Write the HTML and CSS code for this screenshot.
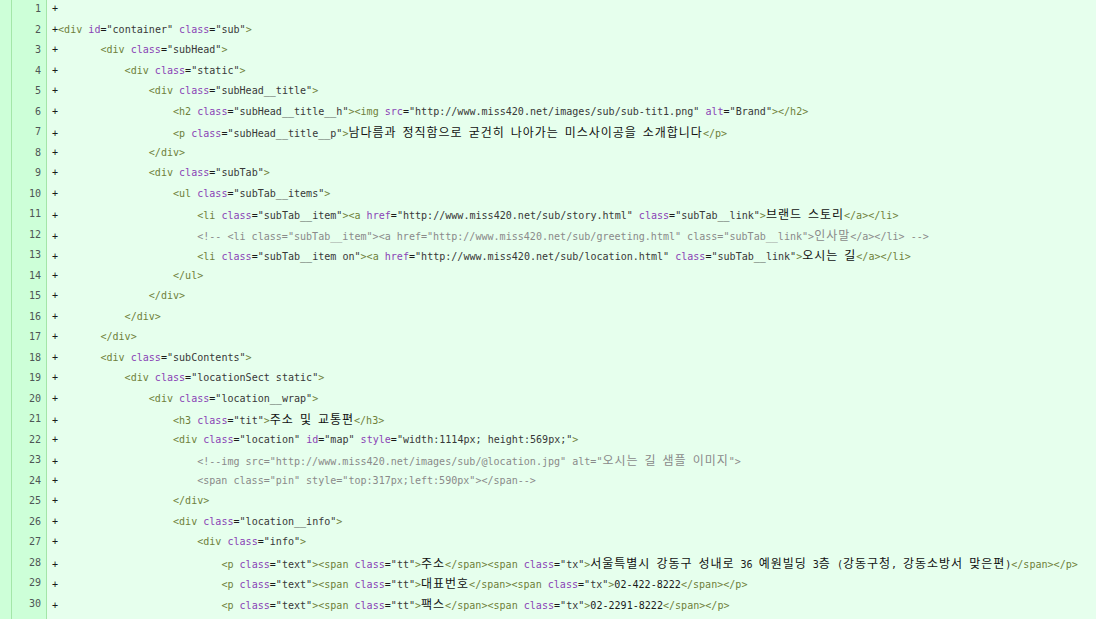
FILE: index.html
```html
<!DOCTYPE html>
<html lang="ko">
<head>
<meta charset="utf-8">
<title>diff</title>
<link rel="stylesheet" href="styles.css">
</head>
<body>
<div class="diff">
  <div class="marker"></div>
  <div class="gutter">
    <div class="num">1</div><div class="num">2</div><div class="num">3</div><div class="num">4</div><div class="num">5</div>
    <div class="num">6</div><div class="num">7</div><div class="num">8</div><div class="num">9</div><div class="num">10</div>
    <div class="num">11</div><div class="num">12</div><div class="num">13</div><div class="num">14</div><div class="num">15</div>
    <div class="num">16</div><div class="num">17</div><div class="num">18</div><div class="num">19</div><div class="num">20</div>
    <div class="num">21</div><div class="num">22</div><div class="num">23</div><div class="num">24</div><div class="num">25</div>
    <div class="num">26</div><div class="num">27</div><div class="num">28</div><div class="num">29</div><div class="num">30</div>
  </div>
  <div class="code">
<div class="line">+</div>
<div class="line">+<span class="t">&lt;div</span> <span class="a">id</span>=<span class="v">"container"</span> <span class="a">class</span>=<span class="v">"sub"</span><span class="t">&gt;</span></div>
<div class="line">+       <span class="t">&lt;div</span> <span class="a">class</span>=<span class="v">"subHead"</span><span class="t">&gt;</span></div>
<div class="line">+           <span class="t">&lt;div</span> <span class="a">class</span>=<span class="v">"static"</span><span class="t">&gt;</span></div>
<div class="line">+               <span class="t">&lt;div</span> <span class="a">class</span>=<span class="v">"subHead__title"</span><span class="t">&gt;</span></div>
<div class="line">+                   <span class="t">&lt;h2</span> <span class="a">class</span>=<span class="v">"subHead__title__h"</span><span class="t">&gt;&lt;img</span> <span class="a">src</span>=<span class="v">"http://www.miss420.net/images/sub/sub-tit1.png"</span> <span class="a">alt</span>=<span class="v">"Brand"</span><span class="t">&gt;&lt;/h2&gt;</span></div>
<div class="line">+                   <span class="t">&lt;p</span> <span class="a">class</span>=<span class="v">"subHead__title__p"</span><span class="t">&gt;</span><span class="k">남다름과</span> <span class="k">정직함으로</span> <span class="k">굳건히</span> <span class="k">나아가는</span> <span class="k">미스사이공을</span> <span class="k">소개합니다</span><span class="t">&lt;/p&gt;</span></div>
<div class="line">+               <span class="t">&lt;/div&gt;</span></div>
<div class="line">+               <span class="t">&lt;div</span> <span class="a">class</span>=<span class="v">"subTab"</span><span class="t">&gt;</span></div>
<div class="line">+                   <span class="t">&lt;ul</span> <span class="a">class</span>=<span class="v">"subTab__items"</span><span class="t">&gt;</span></div>
<div class="line">+                       <span class="t">&lt;li</span> <span class="a">class</span>=<span class="v">"subTab__item"</span><span class="t">&gt;&lt;a</span> <span class="a">href</span>=<span class="v">"http://www.miss420.net/sub/story.html"</span> <span class="a">class</span>=<span class="v">"subTab__link"</span><span class="t">&gt;</span><span class="k">브랜드</span> <span class="k">스토리</span><span class="t">&lt;/a&gt;&lt;/li&gt;</span></div>
<div class="line">+                       <span class="c">&lt;!-- &lt;li class="subTab__item"&gt;&lt;a href="http://www.miss420.net/sub/greeting.html" class="subTab__link"&gt;<span class="k">인사말</span>&lt;/a&gt;&lt;/li&gt; --&gt;</span></div>
<div class="line">+                       <span class="t">&lt;li</span> <span class="a">class</span>=<span class="v">"subTab__item on"</span><span class="t">&gt;&lt;a</span> <span class="a">href</span>=<span class="v">"http://www.miss420.net/sub/location.html"</span> <span class="a">class</span>=<span class="v">"subTab__link"</span><span class="t">&gt;</span><span class="k">오시는</span> <span class="k">길</span><span class="t">&lt;/a&gt;&lt;/li&gt;</span></div>
<div class="line">+                   <span class="t">&lt;/ul&gt;</span></div>
<div class="line">+               <span class="t">&lt;/div&gt;</span></div>
<div class="line">+           <span class="t">&lt;/div&gt;</span></div>
<div class="line">+       <span class="t">&lt;/div&gt;</span></div>
<div class="line">+       <span class="t">&lt;div</span> <span class="a">class</span>=<span class="v">"subContents"</span><span class="t">&gt;</span></div>
<div class="line">+           <span class="t">&lt;div</span> <span class="a">class</span>=<span class="v">"locationSect static"</span><span class="t">&gt;</span></div>
<div class="line">+               <span class="t">&lt;div</span> <span class="a">class</span>=<span class="v">"location__wrap"</span><span class="t">&gt;</span></div>
<div class="line">+                   <span class="t">&lt;h3</span> <span class="a">class</span>=<span class="v">"tit"</span><span class="t">&gt;</span><span class="k">주소</span> <span class="k">및</span> <span class="k">교통편</span><span class="t">&lt;/h3&gt;</span></div>
<div class="line">+                   <span class="t">&lt;div</span> <span class="a">class</span>=<span class="v">"location"</span> <span class="a">id</span>=<span class="v">"map"</span> <span class="a">style</span>=<span class="v">"width:1114px; height:569px;"</span><span class="t">&gt;</span></div>
<div class="line">+                       <span class="c">&lt;!--img src="http://www.miss420.net/images/sub/@location.jpg" alt="<span class="k">오시는</span> <span class="k">길</span> <span class="k">샘플</span> <span class="k">이미지</span>"&gt;</span></div>
<div class="line">+                       <span class="c">&lt;span class="pin" style="top:317px;left:590px"&gt;&lt;/span--&gt;</span></div>
<div class="line">+                   <span class="t">&lt;/div&gt;</span></div>
<div class="line">+                   <span class="t">&lt;div</span> <span class="a">class</span>=<span class="v">"location__info"</span><span class="t">&gt;</span></div>
<div class="line">+                       <span class="t">&lt;div</span> <span class="a">class</span>=<span class="v">"info"</span><span class="t">&gt;</span></div>
<div class="line">+                           <span class="t">&lt;p</span> <span class="a">class</span>=<span class="v">"text"</span><span class="t">&gt;&lt;span</span> <span class="a">class</span>=<span class="v">"tt"</span><span class="t">&gt;</span><span class="k">주소</span><span class="t">&lt;/span&gt;&lt;span</span> <span class="a">class</span>=<span class="v">"tx"</span><span class="t">&gt;</span><span class="k">서울특별시</span> <span class="k">강동구</span> <span class="k">성내로</span> 36 <span class="k">예원빌딩</span> 3<span class="k">층</span> (<span class="k">강동구청</span>, <span class="k">강동소방서</span> <span class="k">맞은편</span>)<span class="t">&lt;/span&gt;&lt;/p&gt;</span></div>
<div class="line">+                           <span class="t">&lt;p</span> <span class="a">class</span>=<span class="v">"text"</span><span class="t">&gt;&lt;span</span> <span class="a">class</span>=<span class="v">"tt"</span><span class="t">&gt;</span><span class="k">대표번호</span><span class="t">&lt;/span&gt;&lt;span</span> <span class="a">class</span>=<span class="v">"tx"</span><span class="t">&gt;</span>02-422-8222<span class="t">&lt;/span&gt;&lt;/p&gt;</span></div>
<div class="line">+                           <span class="t">&lt;p</span> <span class="a">class</span>=<span class="v">"text"</span><span class="t">&gt;&lt;span</span> <span class="a">class</span>=<span class="v">"tt"</span><span class="t">&gt;</span><span class="k">팩스</span><span class="t">&lt;/span&gt;&lt;span</span> <span class="a">class</span>=<span class="v">"tx"</span><span class="t">&gt;</span>02-2291-8222<span class="t">&lt;/span&gt;&lt;/p&gt;</span></div>
  </div>
</div>
</body>
</html>
```
FILE: styles.css
```css
html, body {
  margin: 0;
  padding: 0;
  background: #e6ffed;
  overflow: hidden;
}

.diff {
  display: flex;
  min-height: 100vh;
  font-family: "DejaVu Sans Mono", "Liberation Mono", monospace;
  font-size: 10.05px;
  color: #222;
}

.marker {
  width: 11px;
  background: #cdffd8;
  border-right: 1px solid #a3e6a8;
}

.gutter {
  width: 34px;
  background: #cdffd8;
  border-right: 1px solid #a3e6a8;
}

.num {
  height: 20.5px;
  line-height: 20.5px;
  text-align: right;
  padding-right: 5px;
  color: #4d5656;
}

.gutter .num:first-child,
.code .line:first-child {
  margin-top: -1px;
}

.code {
  flex: 1;
  padding-left: 5px;
}

.line {
  height: 20.5px;
  line-height: 20.5px;
  white-space: pre;
  color: #1a1a1a;
}

.t { color: #6f7f3a; }
.a { color: #8a44b6; }
.v { color: #383838; }
.c { color: #8a8a8a; }
.c .k { color: #8a8a8a; }

.k {
  font-family: "Noto Sans CJK KR", sans-serif;
  font-size: 12px;
  letter-spacing: 0.96px;
  color: #111;
}
```
